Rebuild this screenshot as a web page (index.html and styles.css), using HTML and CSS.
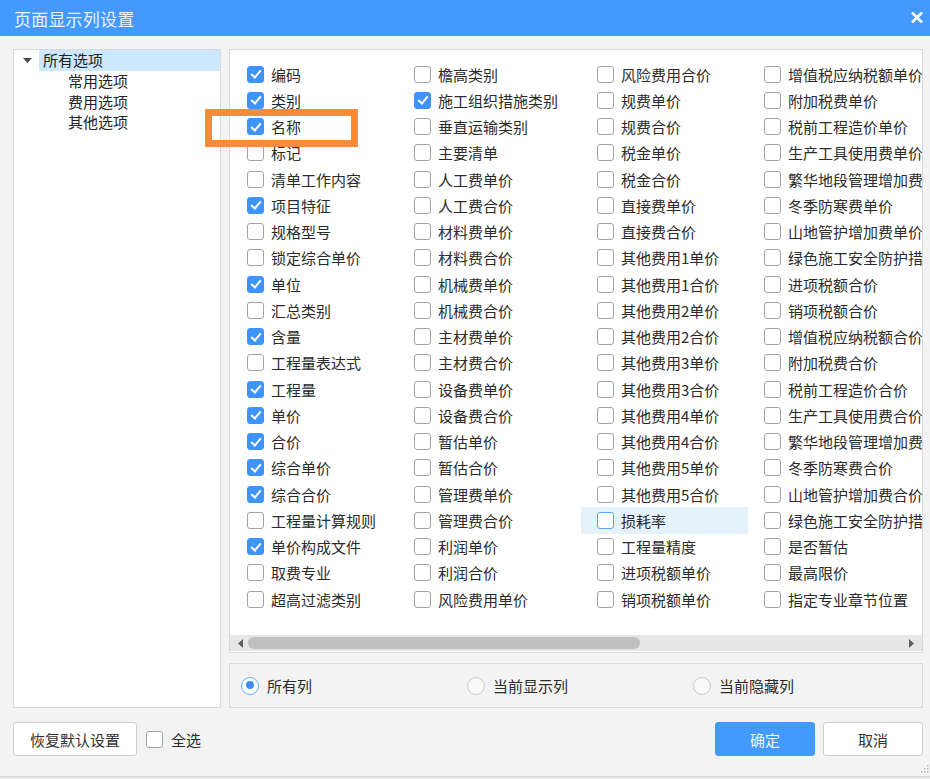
FILE: index.html
```html
<!DOCTYPE html>
<html lang="zh-CN">
<head>
<meta charset="utf-8">
<title>页面显示列设置</title>
<link rel="stylesheet" href="styles.css">
</head>
<body>
<div class="dialog">
  <div class="titlebar">
    <span class="title">页面显示列设置</span>
    <svg class="close" width="12" height="11" viewBox="0 0 12 11"><path d="M1 0.5 L11 10.5 M11 0.5 L1 10.5" stroke="#fff" stroke-width="2.6" fill="none"/></svg>
  </div>
  <div class="content">
    <div class="main">
      <div class="tree">
        <div class="tree-root">
          <span class="arrow"><svg width="9" height="5" viewBox="0 0 9 5"><path d="M0 0 H9 L4.5 5 Z" fill="#4a4a4a"/></svg></span>
          <span class="tree-label selected">所有选项</span>
        </div>
        <div class="tree-child">常用选项</div>
        <div class="tree-child">费用选项</div>
        <div class="tree-child">其他选项</div>
      </div>
      <div class="right">
        <div class="list-panel">
          <div class="grid-wrap">
            <div class="grid" id="grid">
              <div class="cell"><span class="cb on"></span>编码</div>
              <div class="cell"><span class="cb on"></span>类别</div>
              <div class="cell"><span class="cb on"></span>名称</div>
              <div class="cell"><span class="cb"></span>标记</div>
              <div class="cell"><span class="cb"></span>清单工作内容</div>
              <div class="cell"><span class="cb on"></span>项目特征</div>
              <div class="cell"><span class="cb"></span>规格型号</div>
              <div class="cell"><span class="cb"></span>锁定综合单价</div>
              <div class="cell"><span class="cb on"></span>单位</div>
              <div class="cell"><span class="cb"></span>汇总类别</div>
              <div class="cell"><span class="cb on"></span>含量</div>
              <div class="cell"><span class="cb"></span>工程量表达式</div>
              <div class="cell"><span class="cb on"></span>工程量</div>
              <div class="cell"><span class="cb on"></span>单价</div>
              <div class="cell"><span class="cb on"></span>合价</div>
              <div class="cell"><span class="cb on"></span>综合单价</div>
              <div class="cell"><span class="cb on"></span>综合合价</div>
              <div class="cell"><span class="cb"></span>工程量计算规则</div>
              <div class="cell"><span class="cb on"></span>单价构成文件</div>
              <div class="cell"><span class="cb"></span>取费专业</div>
              <div class="cell"><span class="cb"></span>超高过滤类别</div>

              <div class="cell"><span class="cb"></span>檐高类别</div>
              <div class="cell"><span class="cb on"></span>施工组织措施类别</div>
              <div class="cell"><span class="cb"></span>垂直运输类别</div>
              <div class="cell"><span class="cb"></span>主要清单</div>
              <div class="cell"><span class="cb"></span>人工费单价</div>
              <div class="cell"><span class="cb"></span>人工费合价</div>
              <div class="cell"><span class="cb"></span>材料费单价</div>
              <div class="cell"><span class="cb"></span>材料费合价</div>
              <div class="cell"><span class="cb"></span>机械费单价</div>
              <div class="cell"><span class="cb"></span>机械费合价</div>
              <div class="cell"><span class="cb"></span>主材费单价</div>
              <div class="cell"><span class="cb"></span>主材费合价</div>
              <div class="cell"><span class="cb"></span>设备费单价</div>
              <div class="cell"><span class="cb"></span>设备费合价</div>
              <div class="cell"><span class="cb"></span>暂估单价</div>
              <div class="cell"><span class="cb"></span>暂估合价</div>
              <div class="cell"><span class="cb"></span>管理费单价</div>
              <div class="cell"><span class="cb"></span>管理费合价</div>
              <div class="cell"><span class="cb"></span>利润单价</div>
              <div class="cell"><span class="cb"></span>利润合价</div>
              <div class="cell"><span class="cb"></span>风险费用单价</div>

              <div class="cell"><span class="cb"></span>风险费用合价</div>
              <div class="cell"><span class="cb"></span>规费单价</div>
              <div class="cell"><span class="cb"></span>规费合价</div>
              <div class="cell"><span class="cb"></span>税金单价</div>
              <div class="cell"><span class="cb"></span>税金合价</div>
              <div class="cell"><span class="cb"></span>直接费单价</div>
              <div class="cell"><span class="cb"></span>直接费合价</div>
              <div class="cell"><span class="cb"></span>其他费用1单价</div>
              <div class="cell"><span class="cb"></span>其他费用1合价</div>
              <div class="cell"><span class="cb"></span>其他费用2单价</div>
              <div class="cell"><span class="cb"></span>其他费用2合价</div>
              <div class="cell"><span class="cb"></span>其他费用3单价</div>
              <div class="cell"><span class="cb"></span>其他费用3合价</div>
              <div class="cell"><span class="cb"></span>其他费用4单价</div>
              <div class="cell"><span class="cb"></span>其他费用4合价</div>
              <div class="cell"><span class="cb"></span>其他费用5单价</div>
              <div class="cell"><span class="cb"></span>其他费用5合价</div>
              <div class="cell hover"><span class="cb"></span>损耗率</div>
              <div class="cell"><span class="cb"></span>工程量精度</div>
              <div class="cell"><span class="cb"></span>进项税额单价</div>
              <div class="cell"><span class="cb"></span>销项税额单价</div>

              <div class="cell"><span class="cb"></span>增值税应纳税额单价</div>
              <div class="cell"><span class="cb"></span>附加税费单价</div>
              <div class="cell"><span class="cb"></span>税前工程造价单价</div>
              <div class="cell"><span class="cb"></span>生产工具使用费单价</div>
              <div class="cell"><span class="cb"></span>繁华地段管理增加费单价</div>
              <div class="cell"><span class="cb"></span>冬季防寒费单价</div>
              <div class="cell"><span class="cb"></span>山地管护增加费单价</div>
              <div class="cell"><span class="cb"></span>绿色施工安全防护措施费单价</div>
              <div class="cell"><span class="cb"></span>进项税额合价</div>
              <div class="cell"><span class="cb"></span>销项税额合价</div>
              <div class="cell"><span class="cb"></span>增值税应纳税额合价</div>
              <div class="cell"><span class="cb"></span>附加税费合价</div>
              <div class="cell"><span class="cb"></span>税前工程造价合价</div>
              <div class="cell"><span class="cb"></span>生产工具使用费合价</div>
              <div class="cell"><span class="cb"></span>繁华地段管理增加费合价</div>
              <div class="cell"><span class="cb"></span>冬季防寒费合价</div>
              <div class="cell"><span class="cb"></span>山地管护增加费合价</div>
              <div class="cell"><span class="cb"></span>绿色施工安全防护措施费合价</div>
              <div class="cell"><span class="cb"></span>是否暂估</div>
              <div class="cell"><span class="cb"></span>最高限价</div>
              <div class="cell"><span class="cb"></span>指定专业章节位置</div>
            </div>
          </div>
          <div class="hscroll">
            <svg class="sarrow" width="5" height="9" viewBox="0 0 5 9"><path d="M5 0 V9 L0 4.5 Z" fill="#606060"/></svg>
            <div class="thumb"></div>
            <svg class="sarrow right-arrow" width="5" height="9" viewBox="0 0 5 9"><path d="M0 0 V9 L5 4.5 Z" fill="#606060"/></svg>
          </div>
        </div>
        <div class="radio-panel">
          <label class="radio"><span class="rb on"></span>所有列</label>
          <label class="radio"><span class="rb"></span>当前显示列</label>
          <label class="radio"><span class="rb"></span>当前隐藏列</label>
        </div>
      </div>
    </div>
    <div class="footer">
      <button class="btn">恢复默认设置</button>
      <label class="selall"><span class="cb"></span>全选</label>
      <div class="actions">
        <button class="btn primary">确定</button>
        <button class="btn">取消</button>
      </div>
    </div>
  </div>
  <div class="annot"></div>
  <svg class="grip" width="8" height="8" viewBox="0 0 8 8"><g fill="#b8b8b8"><rect x="6" y="0" width="1.5" height="1.5"/><rect x="3" y="3" width="1.5" height="1.5"/><rect x="6" y="3" width="1.5" height="1.5"/><rect x="0" y="6" width="1.5" height="1.5"/><rect x="3" y="6" width="1.5" height="1.5"/><rect x="6" y="6" width="1.5" height="1.5"/></g></svg>
</div>
</body>
</html>
```

FILE: styles.css
```css
* { box-sizing: border-box; }
html, body {
  margin: 0;
  padding: 0;
  background: #e9e9e9;
}
body {
  font-family: "Noto Sans CJK SC", "Noto Sans", "Liberation Sans", sans-serif;
  font-size: 15px;
  color: #333;
}
.dialog {
  position: relative;
  width: 930px;
  height: 777px;
  background: #f3f3f3;
  border-bottom: 1px solid #d6d6d6;
  display: flex;
  flex-direction: column;
}
.titlebar {
  height: 36px;
  background: #4499ff;
  display: flex;
  align-items: center;
  padding: 0 7px 0 14px;
}
.title {
  color: #e9f2ff;
  font-size: 17px;
  letter-spacing: 0.2px;
}
.close {
  margin-left: auto;
  margin-top: -2px;
}
.content {
  padding: 13px 7px 0 13px;
  display: flex;
  flex-direction: column;
}
.main {
  display: flex;
  gap: 8px;
  height: 659px;
}
.tree {
  flex: none;
  width: 208px;
  background: #fff;
  border: 1px solid #d9d9d9;
}
.tree-root {
  display: flex;
  height: 21px;
  align-items: center;
}
.arrow {
  width: 25px;
  display: flex;
  justify-content: center;
  align-items: center;
  padding-left: 1px;
}
.tree-label {
  flex: 1;
  height: 21px;
  line-height: 20px;
  padding-left: 4px;
  color: #222;
}
.tree-label.selected {
  background: #cce8ff;
}
.tree-child {
  height: 20.5px;
  line-height: 20px;
  padding-left: 54px;
  color: #222;
}
.right {
  flex: 1;
  min-width: 0;
  display: flex;
  flex-direction: column;
  gap: 10px;
}
.list-panel {
  height: 604px;
  background: #fff;
  border: 1px solid #d9d9d9;
  display: flex;
  flex-direction: column;
  padding-bottom: 1px;
  overflow: hidden;
}
.grid-wrap {
  height: 585px;
  overflow: hidden;
  padding: 11px 0 0 1px;
}
.grid {
  display: grid;
  grid-auto-flow: column;
  grid-template-rows: repeat(21, 26.25px);
  grid-template-columns: 167px 183px 167px 260px;
}
.cell {
  display: flex;
  align-items: center;
  padding-left: 16px;
  white-space: nowrap;
  color: #2b2b2b;
}
.cell.hover {
  background: #e5f1fb;
}
.cb {
  flex: none;
  width: 17px;
  height: 17px;
  border: 1px solid #a3a3a3;
  border-radius: 3px;
  background: #fff;
  margin-right: 7px;
  position: relative;
}
.cell.hover .cb {
  border-color: #5aa2f5;
}
.cb.on {
  background: #3f94fb;
  border-color: #3f94fb;
}
.cb.on::after {
  content: "";
  position: absolute;
  left: 5px;
  top: 1.5px;
  width: 4px;
  height: 8px;
  border: solid #fff;
  border-width: 0 2px 2px 0;
  transform: rotate(40deg);
}
.hscroll {
  flex: none;
  height: 16px;
  background: #e6e6e6;
  display: flex;
  align-items: center;
  padding: 0 8px 0 8px;
}
.sarrow { flex: none; }
.thumb {
  width: 392px;
  height: 12px;
  border-radius: 6px;
  background: #c0c0c0;
  margin-left: 5px;
}
.right-arrow {
  margin-left: auto;
}
.radio-panel {
  height: 45px;
  border: 1px solid #dadada;
  background: #f3f3f3;
  display: grid;
  grid-template-columns: 226px 226px 226px;
  align-items: center;
  padding-left: 11px;
}
.radio {
  display: flex;
  align-items: center;
  color: #2b2b2b;
}
.rb {
  width: 18px;
  height: 18px;
  border-radius: 50%;
  border: 1px solid #c9c9c9;
  background: #fafafa;
  margin-right: 8px;
  position: relative;
}
.rb.on {
  border: 1.5px solid #66adff;
  background: #fff;
}
.rb.on::after {
  content: "";
  position: absolute;
  left: 3.5px;
  top: 3.5px;
  width: 8px;
  height: 8px;
  border-radius: 50%;
  background: #3d8ff8;
}
.footer {
  margin-top: 14px;
  height: 34px;
  display: flex;
  align-items: center;
}
.btn {
  font-family: inherit;
  font-size: 15px;
  color: #333;
  background: #fff;
  border: 1px solid #cfcfcf;
  border-radius: 3px;
  height: 34px;
  padding: 0;
  width: 124px;
}
.selall {
  display: flex;
  align-items: center;
  margin-left: 9px;
  color: #2b2b2b;
}
.selall .cb {
  margin-right: 8px;
}
.actions {
  margin-left: auto;
  display: flex;
  gap: 8px;
}
.actions .btn {
  width: 100px;
}
.btn.primary {
  background: #4499ff;
  border-color: #4499ff;
  color: #eef5ff;
}
.annot {
  position: absolute;
  left: 205px;
  top: 109px;
  width: 153px;
  height: 38px;
  border: 7px solid #f68b3b;
}
.grip {
  position: absolute;
  right: 1px;
  bottom: 3px;
}
```
